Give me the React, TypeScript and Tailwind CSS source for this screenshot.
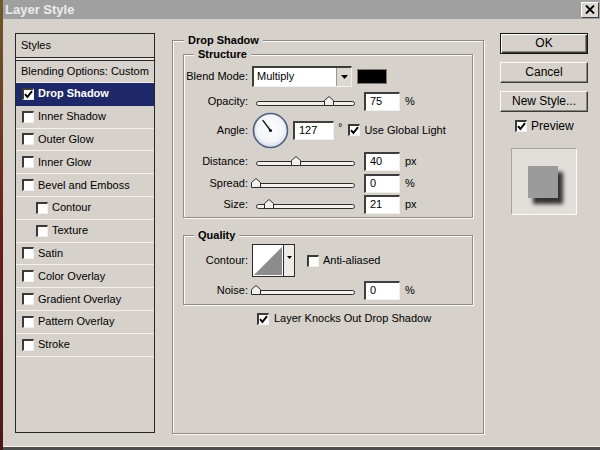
import type { ReactNode } from 'react';

type StyleItem = { name: string; checked?: boolean; active?: boolean; indent?: boolean };

const STYLE_ITEMS: StyleItem[] = [
  { name: 'Drop Shadow', checked: true, active: true },
  { name: 'Inner Shadow' },
  { name: 'Outer Glow' },
  { name: 'Inner Glow' },
  { name: 'Bevel and Emboss' },
  { name: 'Contour', indent: true },
  { name: 'Texture', indent: true },
  { name: 'Satin' },
  { name: 'Color Overlay' },
  { name: 'Gradient Overlay' },
  { name: 'Pattern Overlay' },
  { name: 'Stroke' },
];

function Check({ checked = false }: { checked?: boolean }) {
  return (
    <span className="flex h-[12px] w-[12px] shrink-0 items-center justify-center border-t-2 border-l-2 border-r border-b border-t-[#3a3a3a] border-l-[#3a3a3a] border-r-[#f2f0ec] border-b-[#f2f0ec] bg-white">
      {checked && (
        <svg width="9" height="9" viewBox="0 0 9 9">
          <path d="M1 4.2 L3.4 7 L8 1.2" fill="none" stroke="#000" strokeWidth="2" />
        </svg>
      )}
    </span>
  );
}

function Slider({ at }: { at: number }) {
  return (
    <svg width="108" height="12" viewBox="0 0 108 12" className="ml-[3px] shrink-0">
      <rect x="5.5" y="6.5" width="98" height="4" rx="2" fill="#f3f1ed" stroke="#2c2c2c" />
      <path
        d={`M${at - 4.5} 10.5 V5.5 L${at} 1.5 L${at + 4.5} 5.5 V10.5 Z`}
        fill="#f3f1ed"
        stroke="#2c2c2c"
      />
    </svg>
  );
}

function Field({ value, className }: { value: string; className: string }) {
  return (
    <div
      className={`flex h-[19px] items-center border-t-2 border-l-2 border-r border-b border-t-[#3e3e3e] border-l-[#3e3e3e] border-r-[#f2f0ec] border-b-[#f2f0ec] bg-white pl-[4px] text-[11px] text-black ${className}`}
    >
      {value}
    </div>
  );
}

function Label({ children }: { children: ReactNode }) {
  return <span className="w-[64px] shrink-0 text-right">{children}</span>;
}

function SliderRow({
  label,
  at,
  value,
  unit,
  className,
}: {
  label: string;
  at: number;
  value: string;
  unit: string;
  className: string;
}) {
  return (
    <div className={`flex h-[20px] items-center ${className}`}>
      <Label>{label}</Label>
      <Slider at={at} />
      <Field value={value} className="ml-[5px] w-[36px]" />
      <span className="ml-[5px]">{unit}</span>
    </div>
  );
}

function Button({ label, primary = false }: { label: string; primary?: boolean }) {
  return (
    <button
      type="button"
      className={
        primary
          ? 'flex h-[21px] w-[88px] items-center justify-center border border-[#141414] bg-[#d6d1cb] text-[12px] text-black shadow-[inset_1px_1px_0_#fff,inset_-1px_-1px_0_#3c3c3c,inset_-2px_-2px_0_#8a8782]'
          : 'flex h-[21px] w-[88px] items-center justify-center border border-t-[#fbfaf8] border-l-[#fbfaf8] border-r-[#3a3a3a] border-b-[#3a3a3a] bg-[#d6d1cb] text-[12px] text-black shadow-[inset_-1px_-1px_0_#8a8782]'
      }
    >
      {label}
    </button>
  );
}

function AngleDial() {
  return (
    <svg width="37" height="37" viewBox="0 0 37 37" className="ml-[4px] shrink-0">
      <defs>
        <radialGradient id="dial" cx="50%" cy="45%" r="55%">
          <stop offset="0%" stopColor="#ffffff" />
          <stop offset="70%" stopColor="#f3f5f9" />
          <stop offset="100%" stopColor="#cfd8e6" />
        </radialGradient>
      </defs>
      <circle cx="18.5" cy="18.5" r="17" fill="url(#dial)" stroke="#4f5f7e" strokeWidth="1.6" />
      <line x1="18.5" y1="18.5" x2="10.7" y2="8.1" stroke="#111" strokeWidth="1.4" />
      <circle cx="18.5" cy="18.5" r="1.6" fill="#111" />
    </svg>
  );
}

function ContourPicker() {
  return (
    <div className="ml-[4px] flex h-[33px] w-[43px] border border-[#2a2a2a] bg-white">
      <svg width="30" height="31" viewBox="0 0 30 31" className="shrink-0">
        <rect width="30" height="31" fill="#fff" />
        <path d="M1 30 L29 2 V30 Z" fill="#8c8c8c" />
      </svg>
      <div className="flex w-[11px] justify-center border-l border-[#2a2a2a] bg-[#eeebe7] pt-[11px]">
        <svg width="5" height="3" viewBox="0 0 5 3">
          <path d="M0 0 H5 L2.5 3 Z" fill="#000" />
        </svg>
      </div>
    </div>
  );
}

export default function App() {
  return (
    <div className="flex h-[450px] w-[600px] overflow-hidden bg-[#d6d1cb] font-['Liberation_Sans',Arial,sans-serif] text-[11px] leading-[13px] text-black">
      <div className="w-[3px] shrink-0 bg-gradient-to-b from-[#6e5a2c] via-[#6a1c18] to-[#4a1a16]" />

      <div className="flex w-[597px] flex-col border-b-[3px] border-[#4e4e4e]">
        {/* title bar */}
        <div className="flex h-[19px] shrink-0 items-center justify-between bg-[#a0a0a0] pl-[2px] pr-[1px]">
          <span className="text-[13px] font-bold text-[#ececec]">Layer Style</span>
          <span className="flex h-[16px] w-[18px] items-center justify-center border border-t-[#fff] border-l-[#fff] border-r-[#404040] border-b-[#404040] bg-[#dcd8d2]">
            <svg width="10" height="9" viewBox="0 0 10 9">
              <path d="M1 0.5 L9 8.5 M9 0.5 L1 8.5" stroke="#000" strokeWidth="1.9" />
            </svg>
          </span>
        </div>

        <div className="flex flex-1 pl-[12px] pt-[14px] shadow-[inset_0_-1px_0_#f4f2ee]">
          {/* styles list */}
          <div className="flex h-[400px] w-[140px] shrink-0 flex-col border border-[#262626]">
            <div className="flex h-[24px] shrink-0 items-center border-b border-[#262626] pl-[5px]">
              Styles
            </div>
            <div className="h-[3px] shrink-0 border-b border-[#262626] bg-[#ebe8e3]" />
            <div className="flex h-[22px] shrink-0 items-center border-b border-[#f3f1ec] pl-[5px]">
              Blending Options: Custom
            </div>
            {STYLE_ITEMS.map((item) => (
              <div
                key={item.name}
                className={`flex h-[22.8px] shrink-0 items-center gap-[4px] border-b ${
                  item.active
                    ? 'border-[#1e2868] bg-[#1e2868] font-bold text-white'
                    : 'border-[#f3f1ec]'
                } ${item.indent ? 'pl-[20px]' : 'pl-[6px]'}`}
              >
                <Check checked={item.checked} />
                <span>{item.name}</span>
              </div>
            ))}
          </div>

          {/* main settings */}
          <fieldset className="ml-[17px] mt-[1px] h-[400px] w-[312px] shrink-0 border border-[#8e8a85] shadow-[inset_1px_1px_0_#fbfaf8,1px_1px_0_#fbfaf8]">
            <legend className="ml-[11px] bg-[#d6d1cb] px-[4px] font-bold">Drop Shadow</legend>
            <div className="flex flex-col px-[10px]">
              <fieldset className="mt-[1px] border border-[#8e8a85] pb-[3px] pt-[4px] shadow-[inset_1px_1px_0_#fbfaf8,1px_1px_0_#fbfaf8]">
                <legend className="ml-[10px] bg-[#d6d1cb] px-[4px] font-bold">Structure</legend>

                <div className="flex h-[22px] items-center">
                  <Label>Blend Mode:</Label>
                  <div className="ml-[4px] flex h-[21px] w-[100px] items-center border-t-2 border-l-2 border-r border-b border-t-[#3e3e3e] border-l-[#3e3e3e] border-r-[#f2f0ec] border-b-[#f2f0ec] bg-white">
                    <span className="flex-1 pl-[3px]">Multiply</span>
                    <span className="flex h-full w-[15px] items-center justify-center border-l border-[#9a9690] bg-[#dcd8d2]">
                      <svg width="7" height="4" viewBox="0 0 7 4">
                        <path d="M0 0 H7 L3.5 4 Z" fill="#000" />
                      </svg>
                    </span>
                  </div>
                  <span className="ml-[5px] h-[15px] w-[30px] border border-[#7a7670] bg-black" />
                </div>

                <SliderRow label="Opacity:" at={78} value="75" unit="%" className="mt-[4px]" />

                <div className="flex h-[38px] items-center">
                  <Label>Angle:</Label>
                  <AngleDial />
                  <Field value="127" className="ml-[4px] w-[41px]" />
                  <span className="ml-[4px] self-start pt-[10px]">°</span>
                  <span className="ml-[6px]">
                    <Check checked />
                  </span>
                  <span className="ml-[4px]">Use Global Light</span>
                </div>

                <SliderRow label="Distance:" at={45} value="40" unit="px" className="mt-[2px]" />
                <SliderRow label="Spread:" at={5} value="0" unit="%" className="mt-[2px]" />
                <SliderRow label="Size:" at={18} value="21" unit="px" className="mt-[1px]" />
              </fieldset>

              <fieldset className="mt-[11px] border border-[#8e8a85] pb-[4px] pt-[2px] shadow-[inset_1px_1px_0_#fbfaf8,1px_1px_0_#fbfaf8]">
                <legend className="ml-[10px] bg-[#d6d1cb] px-[4px] font-bold">Quality</legend>
                <div className="flex h-[33px] items-center">
                  <Label>Contour:</Label>
                  <ContourPicker />
                  <span className="ml-[12px]">
                    <Check />
                  </span>
                  <span className="ml-[4px]">Anti-aliased</span>
                </div>
                <SliderRow label="Noise:" at={5} value="0" unit="%" className="mt-[3px]" />
              </fieldset>

              <div className="ml-[74px] mt-[7px] flex h-[13px] items-center gap-[5px]">
                <Check checked />
                <span>Layer Knocks Out Drop Shadow</span>
              </div>
            </div>
          </fieldset>

          {/* buttons and preview */}
          <div className="ml-[16px] flex w-[88px] shrink-0 flex-col">
            <Button label="OK" primary />
            <div className="mt-[8px]">
              <Button label="Cancel" />
            </div>
            <div className="mt-[8px]">
              <Button label="New Style..." />
            </div>
            <div className="ml-[15px] mt-[7px] flex h-[14px] items-center gap-[4px] text-[12px]">
              <Check checked />
              <span>Preview</span>
            </div>
            <div className="ml-[11px] mt-[15px] h-[67px] w-[66px] border border-t-[#a8a49e] border-l-[#a8a49e] border-r-[#fbfaf8] border-b-[#fbfaf8] bg-[#e2dfdb] pl-[16px] pt-[17px]">
              <div className="h-[32px] w-[30px] bg-[#9b9b9b] shadow-[5px_6px_4px_rgba(20,20,20,0.85)]" />
            </div>
          </div>
        </div>
      </div>
    </div>
  );
}
